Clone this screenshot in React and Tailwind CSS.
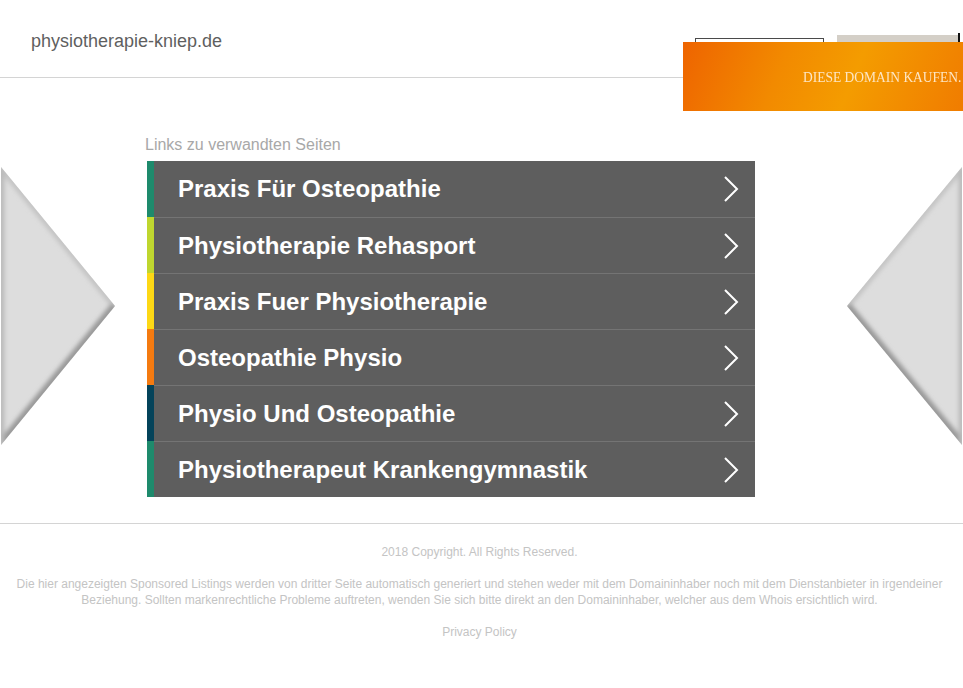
import React from 'react'

const links = [
  { label: 'Praxis Für Osteopathie', color: 'bg-[#1e8a6c]' },
  { label: 'Physiotherapie Rehasport', color: 'bg-[#bfd62f]' },
  { label: 'Praxis Fuer Physiotherapie', color: 'bg-[#fdd815]' },
  { label: 'Osteopathie Physio', color: 'bg-[#f47a10]' },
  { label: 'Physio Und Osteopathie', color: 'bg-[#04435a]' },
  { label: 'Physiotherapeut Krankengymnastik', color: 'bg-[#1e8a6c]' },
]

function Chevron() {
  return (
    <svg width="16" height="28" viewBox="0 0 16 28" fill="none">
      <polyline points="2,2 14,14 2,26" stroke="#ffffff" strokeWidth="2" strokeLinejoin="miter" />
    </svg>
  )
}

function SideArrow({ flip }) {
  const id = flip ? 'r' : 'l'
  const pts = flip ? '116,0 1,139 116,278' : '1,0 115,139 1,278'
  const edgeX = flip ? 116 : 1
  const apexX = flip ? 1 : 115
  return (
    <svg width="117" height="280" viewBox="0 0 117 280">
      <defs>
        <clipPath id={`clip-${id}`}>
          <polygon points={pts} />
        </clipPath>
        <filter id={`blur-${id}`} x="-20%" y="-20%" width="140%" height="140%">
          <feGaussianBlur stdDeviation="2.2" />
        </filter>
      </defs>
      <polygon points={pts} fill="#dddddd" />
      <g clipPath={`url(#clip-${id})`} filter={`url(#blur-${id})`}>
        <line x1={edgeX} y1="0" x2={apexX} y2="139" stroke="#c4c4c4" strokeWidth="7" />
        <line x1={apexX} y1="139" x2={edgeX} y2="278" stroke="#999999" strokeWidth="9" />
        <line x1={edgeX} y1="0" x2={edgeX} y2="278" stroke="#bbbbbb" strokeWidth="7" />
      </g>
    </svg>
  )
}

export default function App() {
  return (
    <div className="relative w-[963px] h-[688px] overflow-hidden bg-white font-['Liberation_Sans',Arial,sans-serif]">
      <header className="h-[78px] border-b border-[#d4d4d4]">
        <div className="pl-[31px] pt-[30px] text-[18px] leading-[22px] text-[#5f5f5f]">physiotherapie-kniep.de</div>
      </header>

      {/* boxes peeking out behind the banner */}
      <div className="absolute left-[695px] top-[38px] h-[30px] w-[129px] border border-[#4a4a4a] bg-white" />
      <div className="absolute left-[837px] top-[35px] h-[30px] w-[121px] bg-[#d4cfc7]" />
      <div className="absolute left-[958px] top-[33px] h-[30px] w-[2px] bg-[#111]" />

      <div className="absolute left-[683px] top-[42px] flex h-[69px] w-[280px] items-center bg-[linear-gradient(112deg,#ee6400_0%,#f28a00_35%,#f49c00_60%,#f07c00_100%)] pl-[120px]">
        <span className="inline-block origin-left scale-x-[0.87] whitespace-nowrap font-['Liberation_Serif',serif] text-[15.5px] text-[#fde6c4]">
          DIESE DOMAIN KAUFEN.
        </span>
      </div>

      <main className="flex items-start">
        <div className="mt-[89px] w-[115px] shrink-0">
          <SideArrow />
        </div>
        <div className="ml-[32px] w-[608px] shrink-0 pt-[58px]">
          <h2 className="-ml-[2px] mb-[7px] text-[16px] leading-[18px] text-[#a8a8a8]">Links zu verwandten Seiten</h2>
          <ul>
            {links.map((l, i) => (
              <li key={l.label} className="flex h-[56px]">
                <div className={`w-[7px] shrink-0 ${l.color}`} />
                <div
                  className={`flex flex-1 items-center justify-between bg-[#5e5e5e] pl-[24px] pr-[16px] ${
                    i > 0 ? 'border-t border-[#747474]' : ''
                  }`}
                >
                  <span className="text-[24px] font-bold leading-none text-white">{l.label}</span>
                  <Chevron />
                </div>
              </li>
            ))}
          </ul>
        </div>
        <div className="ml-[91px] mt-[89px] w-[117px] shrink-0">
          <SideArrow flip />
        </div>
      </main>

      <footer className="mt-[26px] border-t border-[#d4d4d4] pl-[13px] pr-[17px] pt-[20px] text-center text-[12px] leading-[16px] text-[#c4c4c4]">
        <p>2018 Copyright. All Rights Reserved.</p>
        <p className="mt-[16px]">
          Die hier angezeigten Sponsored Listings werden von dritter Seite automatisch generiert und stehen weder mit dem Domaininhaber noch mit dem Dienstanbieter in irgendeiner Beziehung. Sollten markenrechtliche Probleme auftreten, wenden Sie sich bitte direkt an den Domaininhaber, welcher aus dem Whois ersichtlich wird.
        </p>
        <p className="mt-[16px]">Privacy Policy</p>
      </footer>
    </div>
  )
}
